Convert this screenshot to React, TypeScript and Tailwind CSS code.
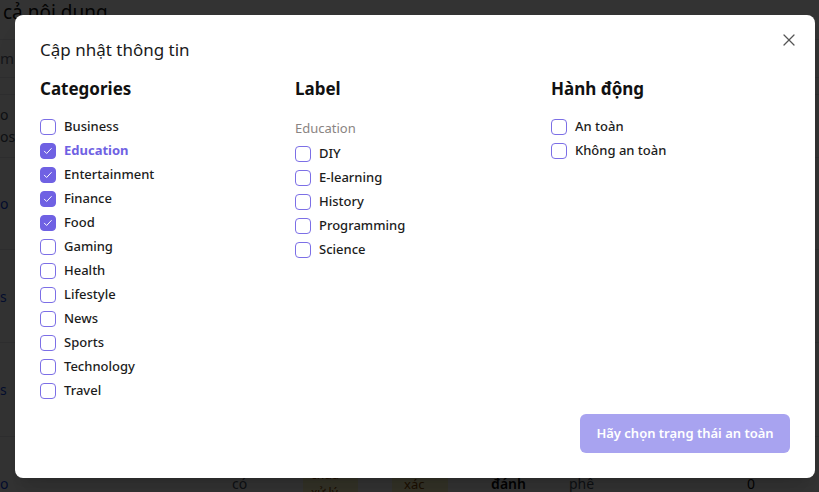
import { X } from "lucide-react";

const categories = [
  { name: "Business", checked: false },
  { name: "Education", checked: true, active: true },
  { name: "Entertainment", checked: true },
  { name: "Finance", checked: true },
  { name: "Food", checked: true },
  { name: "Gaming", checked: false },
  { name: "Health", checked: false },
  { name: "Lifestyle", checked: false },
  { name: "News", checked: false },
  { name: "Sports", checked: false },
  { name: "Technology", checked: false },
  { name: "Travel", checked: false },
];

const labels = ["DIY", "E-learning", "History", "Programming", "Science"];
const actions = ["An toàn", "Không an toàn"];

function Box({ checked }: { checked?: boolean }) {
  return (
    <span
      className={`flex h-4 w-4 shrink-0 items-center justify-center rounded-[4px] border-[1.5px] ${
        checked ? "border-[#6f61e3] bg-[#6f61e3]" : "border-[#7c6fe6] bg-white"
      }`}
    >
      {checked && (
        <svg viewBox="0 0 16 16" className="h-3 w-3" fill="none">
          <path
            d="M3.2 8.3l3 3 6.2-6.6"
            stroke="white"
            strokeWidth="1.3"
            strokeLinecap="round"
            strokeLinejoin="round"
          />
        </svg>
      )}
    </span>
  );
}

function Item({
  name,
  checked,
  active,
}: {
  name: string;
  checked?: boolean;
  active?: boolean;
}) {
  return (
    <label className="flex h-6 items-center gap-2">
      <Box checked={checked} />
      <span
        className={`text-[13px] ${
          active ? "font-bold text-[#6f61e3]" : "font-medium text-[#1c1c1c]"
        }`}
      >
        {name}
      </span>
    </label>
  );
}

function BackgroundPage() {
  return (
    <div className="flex flex-col bg-white text-[#111]">
      {/* tiêu đề trang */}
      <div className="h-10 shrink-0 border-b border-gray-200 pl-[3px] text-[19px] leading-6">
        cả nội dung
      </div>
      {/* tìm kiếm */}
      <div className="flex h-[38px] shrink-0 items-center border-b border-gray-200 text-[15px] text-gray-500">
        m k
      </div>
      <div className="h-[17px] shrink-0 border-b border-gray-200" />
      <div className="flex h-[63px] shrink-0 flex-col justify-center border-b border-gray-200 text-[14px] leading-[22px] text-gray-600">
        <span>o</span>
        <span>ost</span>
      </div>
      <div className="flex h-[92px] shrink-0 items-center border-b border-gray-200 text-[14px] text-blue-700">
        o
      </div>
      <div className="flex h-[93px] shrink-0 items-center border-b border-gray-200 text-[14px] text-blue-700">
        s
      </div>
      <div className="flex h-[94px] shrink-0 items-center border-b border-gray-200 text-[14px] text-blue-700">
        s
      </div>
      {/* hàng cuối của bảng */}
      <div className="flex h-[93px] shrink-0 items-start pt-[37px] text-[14px] leading-5">
        <span className="w-[50px] text-blue-700">o</span>
        <span className="w-[182px] pt-[16px] font-medium">Trả Thưởng</span>
        <span className="w-[71px] text-gray-600">có</span>
        <span className="mt-[-8px] w-[55px] bg-yellow-100 px-2 text-[12px] leading-[18px] text-yellow-800">
          chưa xử lý
        </span>
        <span className="w-[34px]" />
        <span className="w-[56px] bg-yellow-100 px-3 text-[13px] text-yellow-800">
          xác
        </span>
        <span className="w-[43px]" />
        <span className="w-[78px] font-semibold">đánh</span>
        <span className="w-[178px] text-gray-600">phê</span>
        <span>0</span>
      </div>
    </div>
  );
}

export default function App() {
  return (
    <div
      className="relative h-[492px] w-[819px] overflow-hidden"
      style={{ fontFamily: '"Noto Sans", "Open Sans", sans-serif' }}
    >
      <BackgroundPage />

      {/* lớp phủ */}
      <div className="absolute inset-0 bg-black/80" />

      {/* hộp thoại */}
      <div className="absolute left-[15px] top-[15px] flex h-[463px] w-[800px] flex-col rounded-lg bg-white px-[25px] pb-[25px] pt-[21px] shadow-xl">
        <button className="absolute right-[16px] top-[15px] text-[#555]">
          <X size={20} strokeWidth={1.5} />
        </button>

        <h2 className="h-7 text-[17px] leading-7 text-[#1a1a1a]">
          Cập nhật thông tin
        </h2>

        <div className="mt-[11px] grid flex-1 grid-cols-[255px_256px_1fr]">
          {/* Categories */}
          <div>
            <h3 className="h-7 text-[17px] font-bold leading-7 text-[#111]">
              Categories
            </h3>
            <div className="mt-3 flex flex-col">
              {categories.map((c) => (
                <Item key={c.name} {...c} />
              ))}
            </div>
          </div>

          {/* Label */}
          <div>
            <h3 className="h-7 text-[17px] font-bold leading-7 text-[#111]">
              Label
            </h3>
            <p className="mt-[15px] h-5 text-[13px] leading-5 text-[#8a8482]">
              Education
            </p>
            <div className="mt-1 flex flex-col">
              {labels.map((l) => (
                <Item key={l} name={l} />
              ))}
            </div>
          </div>

          {/* Hành động */}
          <div>
            <h3 className="h-7 text-[17px] font-bold leading-7 text-[#111]">
              Hành động
            </h3>
            <div className="mt-3 flex flex-col">
              {actions.map((a) => (
                <Item key={a} name={a} />
              ))}
            </div>
          </div>
        </div>

        <div className="flex justify-end">
          <button
            disabled
            className="h-[39px] w-[210px] rounded-md bg-[#a8a3f0] text-[13px] font-semibold text-white"
          >
            Hãy chọn trạng thái an toàn
          </button>
        </div>
      </div>
    </div>
  );
}
